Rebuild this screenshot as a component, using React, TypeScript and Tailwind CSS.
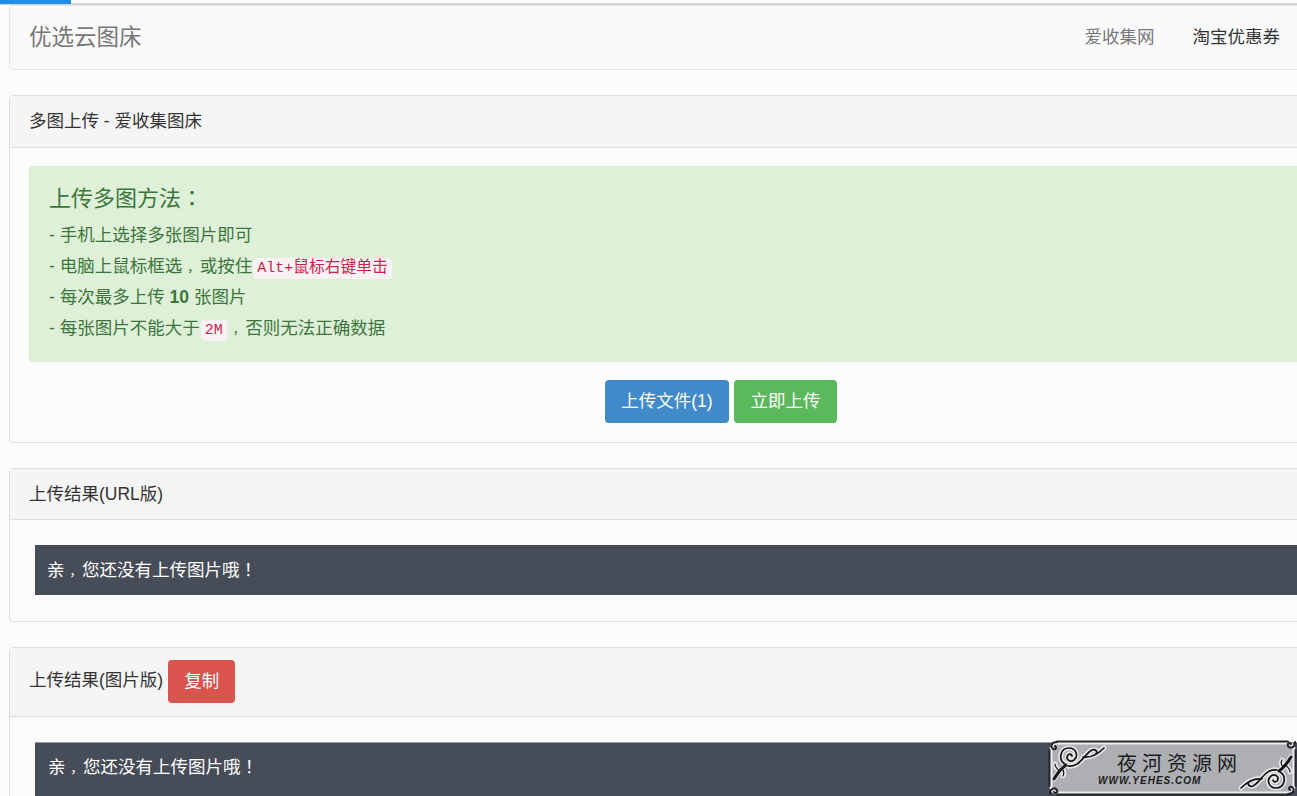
import type { ReactNode } from 'react'

// the reference's comma is small, low and centred in its cell, its colon and ! are centred
function Comma() {
  return <span className="pl-[5px] text-[12.5px]">，</span>
}

function P({ children }: { children: ReactNode }) {
  return <span className="font-['Noto_Sans_CJK_TC']">{children}</span>
}

function Code({ children }: { children: ReactNode }) {
  return (
    <code className="mx-[1px] rounded-[4px] bg-[#f9f2f4] px-[4px] py-[2px] font-['Liberation_Mono','Noto_Sans_CJK_SC',monospace] text-[15px] leading-none text-[#c7254e]">
      {children}
    </code>
  )
}

function Card({ header, className, children }: { header: ReactNode; className: string; children: ReactNode }) {
  return (
    <section className={`rounded-[4px] border border-[#dddde2] bg-[#fcfcfd] ${className}`}>
      {header}
      {children}
    </section>
  )
}

function DarkBox({ children, className }: { children: ReactNode; className: string }) {
  return <div className={`bg-[#464c58] text-white ${className}`}>{children}</div>
}

const ornament = [
  'M6 39C10 33 12 29 18 25',
  'M17 24C10 20 12 8 21 8C28 8 31 16 26 20C22 23 17 19 20 15C22 13 24 15 24 16',
  'M20 26C32 28 36 14 44 10C47 9 50 11 48 14',
  'M35 17C42 18 50 14 56 8',
  'M12 31C9 29 7 27 7 24M14 29C16 31 16 34 15 36',
]

const curls = ['M9 2C3 2 2 7 5 9C8 10 9 7 7 6', 'M2 54C2 48 7 47 9 50C10 53 7 54 6 52']

function WatermarkFrame() {
  return (
    <svg viewBox="0 0 249 56" className="absolute inset-0 h-full w-full" fill="none" strokeLinecap="round">
      <rect x="3" y="3" width="243" height="50" rx="6" fill="#adafb3" stroke="#eeeef0" strokeWidth="3" />
      <path d="M9 1.5H240M9 54.5H240M1.5 10V46M247.5 10V46" stroke="#26262a" strokeWidth="2" />
      {[0, 1].map((side) => (
        <g key={side} transform={side ? 'rotate(180 124.5 28)' : undefined}>
          {ornament.map((d) => (
            <path key={d} d={d} stroke="#e6e6e8" strokeWidth="5" />
          ))}
          {ornament.map((d, i) => (
            <path key={d} d={d} stroke="#121215" strokeWidth={i === 0 ? 3 : i === 4 ? 1.2 : 1.7} />
          ))}
          {curls.map((d) => (
            <path key={d} d={d} stroke="#26262a" strokeWidth="2" />
          ))}
        </g>
      ))}
    </svg>
  )
}

function Watermark() {
  return (
    <div className="absolute bottom-0 left-[1048px] h-[56px] w-[249px]">
      <WatermarkFrame />
      <div className="relative flex h-full flex-col pt-[11px]">
        <div className="pl-[69px] font-['Noto_Sans_CJK_SC',serif] text-[20px] leading-[24px] tracking-[5px] text-[#1c1c1e]">
          夜河资源网
        </div>
        <div className="pl-[50px] font-['Liberation_Sans',sans-serif] text-[10px] leading-[11px] font-bold tracking-[1px] text-[#1c1c1e] italic">
          WWW.YEHES.COM
        </div>
      </div>
    </div>
  )
}

export default function App() {
  return (
    <div className="relative h-[796px] w-[1297px] overflow-hidden bg-[#fcfcfd] font-['Liberation_Sans','Noto_Sans_CJK_SC',sans-serif] text-[17.5px] text-[#333]">
      <div className="h-[5px] border-b-2 border-[#d2d2d7]">
        <div className="h-[4px] w-[71px] bg-[#1e8fe8]" />
      </div>

      <div className="ml-[9px] w-[1424px]">
        <nav className="flex h-[65px] items-center justify-between rounded-[4px] border border-[#e4e4e8] bg-[#fafafb] pr-[152px] pl-[19px]">
          <a className="text-[22.5px] text-[#777]">优选云图床</a>
          <div className="flex items-center gap-[38px]">
            <a className="text-[#777]">爱收集网</a>
            <a className="text-[#333]">淘宝优惠券</a>
          </div>
        </nav>

        <Card
          className="mt-[25px] h-[348px]"
          header={
            <div className="flex h-[52px] items-center border-b border-[#dddde2] bg-[#f5f5f6] px-[19px]">
              多图上传 - 爱收集图床
            </div>
          }
        >
          <div className="px-[19px] pt-[18px]">
            <div className="h-[196px] rounded-[4px] border border-[#d6e9c6] bg-[#dff0d8] pt-[13px] pl-[19px] leading-[31.5px] text-[#3c763d]">
              <h4 className="text-[22px] leading-[33px]">
                上传多图方法<P>：</P>
              </h4>
              <p className="mt-[5px] h-[31px]">- 手机上选择多张图片即可</p>
              <p className="h-[31px]">
                - 电脑上鼠标框选
                <Comma />
                或按住
                <Code>
                  Alt+<span className="text-[15.75px]">鼠标右键单击</span>
                </Code>
              </p>
              <p className="h-[31px]">
                - 每次最多上传 <b>10</b> 张图片
              </p>
              <p>
                - 每张图片不能大于<Code>2M</Code>
                <Comma />
                否则无法正确数据
              </p>
            </div>
            <div className="mt-[18px] flex justify-center gap-[5px]">
              <button className="h-[43px] w-[124px] rounded-[4px] bg-[#428bca] text-white">上传文件(1)</button>
              <button className="h-[43px] w-[103px] rounded-[4px] bg-[#5cb85c] text-white">立即上传</button>
            </div>
          </div>
        </Card>

        <Card
          className="mt-[25px] h-[154px]"
          header={
            <div className="flex h-[51px] items-center border-b border-[#dddde2] bg-[#f5f5f6] px-[19px]">
              上传结果(URL版)
            </div>
          }
        >
          <div className="pt-[25px] pl-[25px]">
            <DarkBox className="h-[50px] pl-[12px] leading-[48px]">
              亲<Comma />
              您还没有上传图片哦<P>！</P>
            </DarkBox>
          </div>
        </Card>

        <Card
          className="mt-[25px] h-[160px]"
          header={
            <div className="flex h-[69px] items-start gap-[5px] border-b border-[#dddde2] bg-[#f5f5f6] px-[19px] pt-[12px]">
              <span className="leading-[40px]">上传结果(图片版)</span>
              <button className="h-[43px] w-[67px] rounded-[4px] bg-[#d9534f] text-white">复制</button>
            </div>
          }
        >
          <div className="pt-[25px] pl-[25px]">
            <DarkBox className="h-[60px] border-t border-[#9a9da3] pt-[10px] pl-[13px] leading-[26px]">
              亲<Comma />
              您还没有上传图片哦<P>！</P>
            </DarkBox>
          </div>
        </Card>
      </div>

      <Watermark />
    </div>
  )
}
